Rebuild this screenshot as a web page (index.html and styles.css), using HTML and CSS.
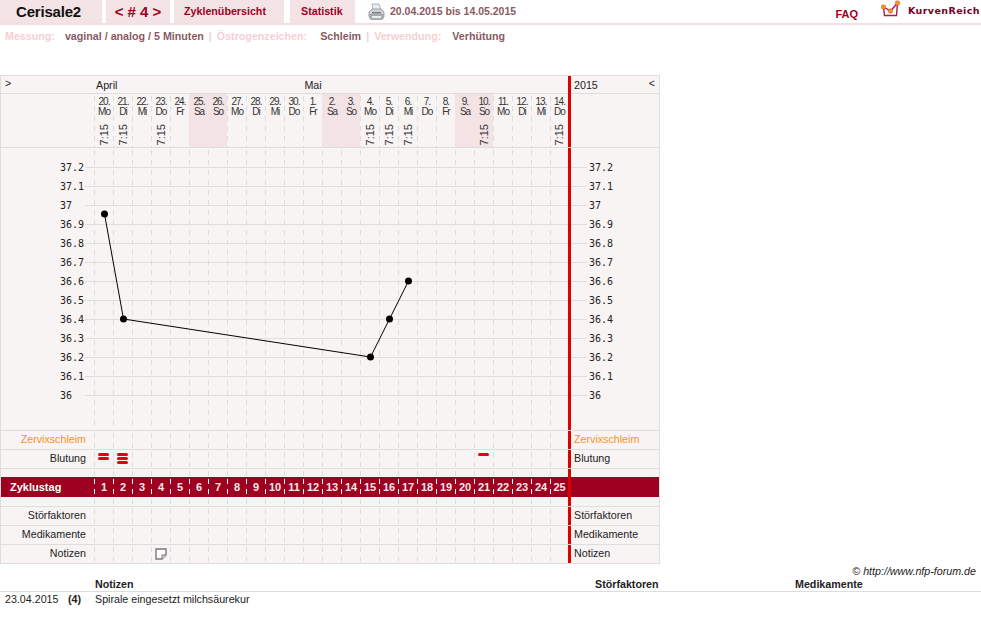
FILE: index.html
```html
<!DOCTYPE html>
<html lang="de">
<head>
    <meta charset="UTF-8">
    <meta name="viewport" content="width=device-width, initial-scale=1.0">
    <title>Cerisale2 - Zyklus 4</title>
    <link rel="stylesheet" href="styles.css">
</head>
<body>
    <header class="topbar">
        <div class="tab tab-name">Cerisale2</div>
        <div class="tab tab-cycle">&lt; # 4 &gt;</div>
        <a href="#" class="tab tab-overview">Zyklenübersicht</a>
        <a href="#" class="tab tab-stats">Statistik</a>
        <svg class="printer" width="17" height="18" viewBox="0 0 17 18">
            <path d="M4 1h7l2 6H5z" fill="#e6edf4" stroke="#9aa7b5" stroke-width="0.8"/>
            <path d="M1 9l3-3h9l3 3v5H1z" fill="#d0d3d6" stroke="#8f8f8f" stroke-width="0.8"/>
            <path d="M1 11h15v4l-2 2H3l-2-2z" fill="#a6abb0"/>
            <rect x="4" y="9" width="9" height="1.5" fill="#7d7d7d"/>
            <rect x="4" y="13" width="9" height="2" fill="#eeeeee"/>
        </svg>
        <div class="daterange">20.04.2015 bis 14.05.2015</div>
        <a href="#" class="faq">FAQ</a>
        <div class="logo">
            <svg width="20" height="18" viewBox="0 0 20 18">
                <path d="M2.5 7.5L3.5 15.5H15.5L16.5 3" fill="none" stroke="#a3195b" stroke-width="1.4"/>
                <path d="M2.5 7L9.5 11L16.5 3" fill="none" stroke="#a3195b" stroke-width="1.4"/>
                <circle cx="2.5" cy="7" r="2.3" fill="#f39a1d" stroke="#c8501e" stroke-width="0.5"/>
                <circle cx="9.5" cy="11" r="2.3" fill="#f39a1d" stroke="#c8501e" stroke-width="0.5"/>
                <circle cx="16.5" cy="3" r="2.3" fill="#f39a1d" stroke="#c8501e" stroke-width="0.5"/>
            </svg>
            <span class="logo-text">KurvenReich</span>
        </div>
    </header>

    <div class="settings">
        <span class="set-label set-mess">Messung:</span>
        <span class="set-value val-mess">vaginal / analog / 5 Minuten</span>
        <span class="set-label sep-1">|</span>
        <span class="set-label set-oest">Östrogenzeichen:</span>
        <span class="set-value val-oest">Schleim</span>
        <span class="set-label sep-2">|</span>
        <span class="set-label set-verw">Verwendung:</span>
        <span class="set-value val-verw">Verhütung</span>
    </div>

    <div class="chart">
        <div class="row row-months">
            <div class="label-left toggle">&gt;</div>
            <div class="months">
                <span class="month-apr">April</span>
                <span class="month-mai">Mai</span>
            </div>
            <div class="side side-year"><span>2015</span><span class="toggle">&lt;</span></div>
        </div>

        <div class="row row-dates">
            <div class="label"></div>
            <div class="days day-grid">
                <div class="date"><span>20.<br>Mo</span><b>7:15</b></div>
                <div class="date"><span>21.<br>Di</span><b>7:15</b></div>
                <div class="date"><span>22.<br>Mi</span></div>
                <div class="date"><span>23.<br>Do</span><b>7:15</b></div>
                <div class="date"><span>24.<br>Fr</span></div>
                <div class="date weekend"><span>25.<br>Sa</span></div>
                <div class="date weekend"><span>26.<br>So</span></div>
                <div class="date"><span>27.<br>Mo</span></div>
                <div class="date"><span>28.<br>Di</span></div>
                <div class="date"><span>29.<br>Mi</span></div>
                <div class="date"><span>30.<br>Do</span></div>
                <div class="date"><span>1.<br>Fr</span></div>
                <div class="date weekend"><span>2.<br>Sa</span></div>
                <div class="date weekend"><span>3.<br>So</span></div>
                <div class="date"><span>4.<br>Mo</span><b>7:15</b></div>
                <div class="date"><span>5.<br>Di</span><b>7:15</b></div>
                <div class="date"><span>6.<br>Mi</span><b>7:15</b></div>
                <div class="date"><span>7.<br>Do</span></div>
                <div class="date"><span>8.<br>Fr</span></div>
                <div class="date weekend"><span>9.<br>Sa</span></div>
                <div class="date weekend"><span>10.<br>So</span><b>7:15</b></div>
                <div class="date"><span>11.<br>Mo</span></div>
                <div class="date"><span>12.<br>Di</span></div>
                <div class="date"><span>13.<br>Mi</span></div>
                <div class="date"><span>14.<br>Do</span><b>7:15</b></div>
            </div>
            <div class="side"></div>
        </div>

        <div class="row row-plot">
            <div class="label"></div>
            <div class="days plot-days"></div>
            <div class="side"></div>
            <!-- temperature curve, x is page px, y is px from top of this row -->
            <svg class="plot" width="658" height="282" viewBox="1 0 658 282">
                <g class="hlines">
                    <path d="M85 19.5H568M85 38.5H568M85 57.5H568M85 76.5H568M85 95.5H568M85 114.5H568M85 133.5H568M85 152.5H568M85 171.5H568M85 190.5H568M85 209.5H568M85 228.5H568M85 247.5H568"/>
                    <path d="M571 19.5H587M571 38.5H587M571 57.5H587M571 76.5H587M571 95.5H587M571 114.5H587M571 133.5H587M571 152.5H587M571 171.5H587M571 190.5H587M571 209.5H587M571 228.5H587M571 247.5H587"/>
                </g>
                <g class="temps">
                    <text x="84" y="23">37.2</text><text x="84" y="42">37.1</text>
                    <text x="72" y="61">37</text><text x="84" y="80">36.9</text>
                    <text x="84" y="99">36.8</text><text x="84" y="118">36.7</text>
                    <text x="84" y="137">36.6</text><text x="84" y="156">36.5</text>
                    <text x="84" y="175">36.4</text><text x="84" y="194">36.3</text>
                    <text x="84" y="213">36.2</text><text x="84" y="232">36.1</text>
                    <text x="72" y="251">36</text>
                </g>
                <g class="temps temps-right">
                    <text x="589" y="23">37.2</text><text x="589" y="42">37.1</text>
                    <text x="589" y="61">37</text><text x="589" y="80">36.9</text>
                    <text x="589" y="99">36.8</text><text x="589" y="118">36.7</text>
                    <text x="589" y="137">36.6</text><text x="589" y="156">36.5</text>
                    <text x="589" y="175">36.4</text><text x="589" y="194">36.3</text>
                    <text x="589" y="213">36.2</text><text x="589" y="232">36.1</text>
                    <text x="589" y="251">36</text>
                </g>
                <polyline class="curve" points="104.5,66 123.5,171 370.5,209 389.5,171 408.5,133"/>
                <g class="dots">
                    <circle cx="104.5" cy="66" r="3.5"/><circle cx="123.5" cy="171" r="3.5"/>
                    <circle cx="370.5" cy="209" r="3.5"/><circle cx="389.5" cy="171" r="3.5"/>
                    <circle cx="408.5" cy="133" r="3.5"/>
                </g>
            </svg>
        </div>

        <div class="row">
            <div class="label label-orange">Zervixschleim</div>
            <div class="days"></div>
            <div class="side label-orange">Zervixschleim</div>
        </div>
        <div class="row">
            <div class="label">Blutung</div>
            <div class="days day-grid">
                <div class="bleed d1"><i></i><i></i></div>
                <div class="bleed d2"><i></i><i></i><i></i></div>
                <div class="bleed d21"><i></i></div>
            </div>
            <div class="side">Blutung</div>
        </div>
        <div class="row row-gap row-gap-top">
            <div class="label"></div>
            <div class="days"></div>
            <div class="side"></div>
        </div>
        <div class="row row-band">
            <div class="label band-title">Zyklustag</div>
            <div class="days day-grid band-days">
                <div>1</div><div>2</div><div>3</div><div>4</div><div>5</div>
                <div>6</div><div>7</div><div>8</div><div>9</div><div>10</div>
                <div>11</div><div>12</div><div>13</div><div>14</div><div>15</div>
                <div>16</div><div>17</div><div>18</div><div>19</div><div>20</div>
                <div>21</div><div>22</div><div>23</div><div>24</div><div>25</div>
            </div>
            <div class="side"></div>
        </div>
        <div class="row row-gap row-gap-bottom">
            <div class="label"></div>
            <div class="days"></div>
            <div class="side"></div>
        </div>
        <div class="row">
            <div class="label">Störfaktoren</div>
            <div class="days"></div>
            <div class="side">Störfaktoren</div>
        </div>
        <div class="row">
            <div class="label">Medikamente</div>
            <div class="days"></div>
            <div class="side">Medikamente</div>
        </div>
        <div class="row">
            <div class="label">Notizen</div>
            <div class="days day-grid">
                <div class="note d4">
                    <svg width="12" height="12" viewBox="0 0 12 12">
                        <path d="M1 1H11V7L7 11H1Z" fill="#fff" stroke="#777" stroke-width="1.4"/>
                        <path d="M7 11V7H11" fill="#ddd" stroke="#777" stroke-width="1"/>
                    </svg>
                </div>
            </div>
            <div class="side">Notizen</div>
        </div>
    </div>

    <div class="copyright">© http://www.nfp-forum.de</div>

    <div class="notes-head">
        <div class="col-notes">Notizen</div>
        <div class="col-stoer">Störfaktoren</div>
        <div class="col-medi">Medikamente</div>
    </div>
    <div class="notes-row">
        <div class="note-date">23.04.2015</div>
        <div class="note-num">(4)</div>
        <div>Spirale eingesetzt milchsäurekur</div>
    </div>
</body>
</html>
```

FILE: styles.css
```css
body {
    font-family: "Liberation Sans", Arial, sans-serif;
    font-size: 10.7px;
    color: #222;
    background-color: #fff;
    margin: 0;
}
a {
    text-decoration: none;
}

/* top bar */
.topbar {
    display: flex;
    align-items: flex-start;
    height: 23px;
    border-bottom: 2px solid #f3dfe1;
}
.tab {
    box-sizing: border-box;
    height: 23px;
    line-height: 23px;
    background-color: #f3e3e5;
    color: #a0001e;
    font-weight: bold;
}
.tab-name {
    width: 102px;
    padding-left: 16px;
    color: #111;
    font-size: 15px;
    letter-spacing: -0.2px;
}
.tab-cycle {
    width: 64px;
    margin-left: 4px;
    text-align: center;
    font-size: 15px;
}
.tab-overview {
    width: 110px;
    margin-left: 4px;
    padding-left: 10px;
}
.tab-stats {
    width: 65px;
    margin-left: 6px;
    padding-left: 11px;
}
.printer {
    margin: 3px 0 0 13px;
}
.daterange {
    margin-left: 5px;
    line-height: 23px;
    font-size: 10.5px;
    font-weight: bold;
    color: #8a5a62;
}
.faq {
    margin: 8px 0 0 auto;
    font-size: 11px;
    font-weight: bold;
    color: #a0001e;
}
.logo {
    display: flex;
    width: 100px;
    margin-left: 23px;
}
.logo svg {
    flex: none;
}
.logo-text {
    margin: 5px 0 0 7px;
    font-family: "DejaVu Sans", sans-serif;
    font-weight: bold;
    font-size: 9.5px;
    letter-spacing: 0.4px;
    color: #7a0026;
}

/* settings line */
.settings {
    display: flex;
    height: 50px;
    padding: 5px 0 0 5px;
    box-sizing: border-box;
    font-weight: bold;
}
.set-label {
    color: #f6cfd2;
}
.set-value {
    color: #8a5a62;
}
.val-mess { margin-left: 10px; }
.sep-1 { margin-left: 5px; }
.set-oest { margin-left: 5px; }
.val-oest { margin-left: 13px; }
.sep-2 { margin-left: 5px; }
.set-verw { margin-left: 5px; }
.val-verw { margin-left: 11px; }

/* chart table */
.chart {
    box-sizing: border-box;
    width: 660px;
    background-color: #f9f4f4;
    border: 1px solid #ddd;
    border-bottom: 0;
}
.row {
    position: relative;
    display: grid;
    grid-template-columns: 93px 474px 91px;
    height: 19px;
    box-sizing: border-box;
    border-bottom: 1px solid #ddd;
    line-height: 17px;
}
.label {
    padding-right: 8px;
    text-align: right;
}
.label-left {
    padding-left: 4px;
}
.label-orange {
    color: #f7931e;
}
.days {
    background: conic-gradient(from 0deg at 1px 5px, transparent 75%, #ddd 0) 0 2px / 19px 10px;
}
.day-grid {
    display: grid;
    grid-template-columns: repeat(24, 19px) 18px;
}
.side {
    padding-left: 3px;
    border-left: 3px solid #e00000;
}

.row-months {
    height: 18px;
    line-height: 18px;
}
.months {
    position: relative;
    display: flex;
}
.month-apr {
    margin-left: 2px;
}
.month-mai {
    margin-left: 187px;
}
.toggle {
    line-height: 15px;
}
.side-year {
    display: flex;
    justify-content: space-between;
    padding-right: 4px;
}

.row-dates {
    height: 54px;
}
.row-dates .days {
    align-items: start;
}
.date {
    display: flex;
    flex-direction: column;
    align-items: center;
    height: 53px;
    padding: 3px 0 0 1px;
    box-sizing: border-box;
    background: conic-gradient(from 0deg at 1px 5px, transparent 75%, #ddd 0) 0 2px / 19px 10px;
    text-align: center;
    font-size: 10px;
    line-height: 10px;
    letter-spacing: -1px;
    color: #333;
}
.date.weekend {
    background: #f3e3e5;
}
.date b {
    margin-top: 7px;
    writing-mode: vertical-rl;
    transform: rotate(180deg);
    font-weight: normal;
    font-size: 11px;
    letter-spacing: 0;
    line-height: 11px;
}

.row-plot {
    height: 283px;
}
.plot {
    position: absolute;
    left: 0;
    top: 0;
}
.hlines path {
    fill: none;
    stroke: #e0dddd;
    stroke-width: 1;
}
.temps text {
    font-family: "DejaVu Sans Mono", monospace;
    font-size: 10px;
    fill: #222;
    text-anchor: end;
}
.temps-right text {
    text-anchor: start;
}
.curve {
    fill: none;
    stroke: #000;
    stroke-width: 1;
}
.dots circle {
    fill: #000;
}

.bleed {
    display: flex;
    flex-direction: column;
    gap: 1px;
    align-items: center;
    padding-top: 3px;
    grid-row: 1;
}
.bleed i {
    display: block;
    width: 11px;
    height: 3px;
    border-radius: 2px;
    background-color: #e00010;
}
.d1 { grid-column: 1; }
.d2 { grid-column: 2; }
.d4 { grid-column: 4; }
.d21 { grid-column: 21; }
.note {
    display: flex;
    align-items: center;
    justify-content: center;
    grid-row: 1;
}

.row-gap {
    border-bottom: 0;
}
.row-gap-top {
    height: 8px;
}
.row-gap-bottom {
    height: 10px;
    border-bottom: 1px solid #ddd;
}
.row-band {
    height: 20px;
    border-bottom: 0;
    background-color: #9e0020;
    line-height: 20px;
    font-size: 11px;
    font-weight: bold;
    color: #f8e8e8;
}
.band-title {
    padding-left: 9px;
    text-align: left;
    color: #fff;
}
.band-days {
    background: conic-gradient(from 0deg at 1px 5px, transparent 75%, #fff 0) 0 2px / 19px 10px;
    text-align: center;
}
.band-days div {
    padding-left: 1px;
}

/* notes table */
.copyright {
    padding-right: 5px;
    margin-top: 1px;
    text-align: right;
    font-style: italic;
    line-height: 13px;
}
.notes-head {
    display: flex;
    height: 13px;
    line-height: 13px;
    font-weight: bold;
    border-bottom: 1px solid #ddd;
}
.col-notes {
    width: 500px;
    margin-left: 95px;
}
.col-stoer {
    width: 200px;
}
.notes-row {
    display: flex;
    line-height: 14px;
}
.note-date {
    width: 63px;
    padding-left: 5px;
}
.note-num {
    width: 27px;
    font-weight: bold;
}
```
